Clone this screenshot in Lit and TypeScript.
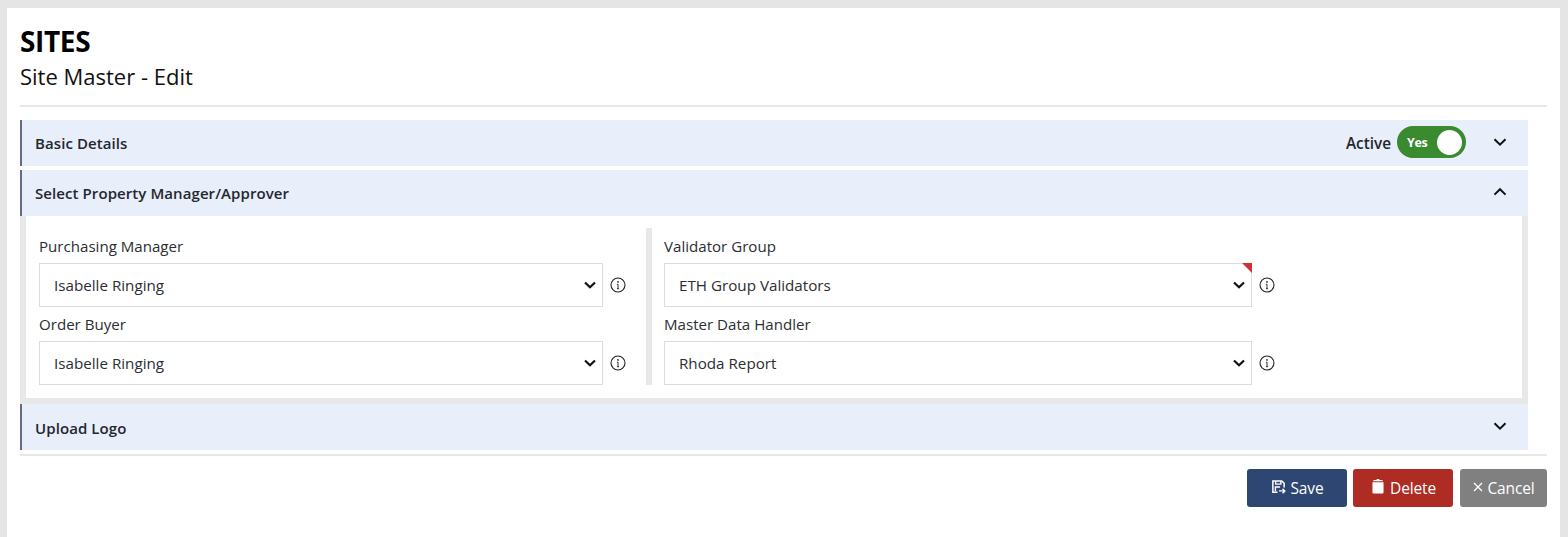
import { LitElement, html, css } from "lit";
import { customElement } from "lit/decorators.js";

const chevDown = html`<svg class="chev" viewBox="0 0 14 14" width="14" height="14"><path d="M1.500 4.200 7 9.600l5.500-5.400" fill="none" stroke="#111" stroke-width="2"/></svg>`;
const chevUp = html`<svg class="chev" viewBox="0 0 14 14" width="14" height="14"><path d="M1.500 9.600 7 4.200l5.500 5.400" fill="none" stroke="#111" stroke-width="2"/></svg>`;
const info = html`<svg class="info" viewBox="0 0 16 16" width="16" height="16"><circle cx="8" cy="8" r="7" fill="none" stroke="#222" stroke-width="1.100"/><circle cx="8" cy="4.900" r="0.900" fill="#333"/><path d="M8 7.200V11.800M6.900 7.300H8M6.900 11.700H9.100" fill="none" stroke="#333" stroke-width="1"/></svg>`;

@customElement("app-root")
export class AppRoot extends LitElement {
  static styles = css`
    :host { display: block; font-family: "Open Sans", "Noto Sans", sans-serif; color: #212529; }
    .page { background: #e5e5e5; padding: 8px 8px 0 7px; height: 529px; }
    .card { background: #fff; height: 529px; padding: 13px 13px 0 13px; box-sizing: border-box; }
    h1 { margin: 0; font-size: 28px; line-height: 40px; font-weight: 700; color: #000; letter-spacing: -0.35px; }
    h2 { margin: 0; font-size: 22px; line-height: 30px; font-weight: 400; color: #111; }
    .rule { height: 2px; background: #e8e8e8; }
    .top { margin-top: 14px; margin-bottom: 13px; }
    .sections { width: 1508px; display: flex; flex-direction: column; gap: 4px; }
    .bar { height: 46px; box-sizing: border-box; background: #e8eefa; border-left: 2px solid #666c80; padding: 0 21px 0 13px; display: flex; align-items: center; font-size: 15px; font-weight: 600; color: #23272d; letter-spacing: 0.08px; }
    .bar .name { flex: 1; }
    .low .name { padding-top: 2px; }
    .active { font-size: 15.300px; margin-right: 6px; letter-spacing: 0; }
    .toggle { width: 69px; height: 32px; box-sizing: border-box; border-radius: 16px; background: #3a8a2f; color: #fff; font-size: 12.500px; font-weight: 700; display: flex; align-items: center; justify-content: space-between; padding: 0 4px 0 10px; margin: 0 27px 2px 0; letter-spacing: -0.3px; }
    .knob { width: 25px; height: 25px; border-radius: 50%; background: #fff; }
    .panel { background: #e8e8e8; padding: 0 6px 6px 6px; }
    .inner { background: #fff; height: 182px; box-sizing: border-box; padding: 12px 0 13px 13px; display: flex; }
    .col { display: flex; flex-direction: column; }
    .left { width: 607px; border-right: 6px solid #e8e8e8; margin-right: 12px; }
    .fieldlabel { font-size: 15.100px; line-height: 34px; height: 34px; color: #2a2e33; }
    .fieldlabel.first { height: 35px; line-height: 37px; }
    .line { display: flex; align-items: center; gap: 7px; }
    select { appearance: none; -webkit-appearance: none; height: 44px; box-sizing: border-box; border: 1px solid #dcdcdc; background: #fff; border-radius: 0; padding: 0 0 0 14px; font: inherit; font-size: 15.200px; color: #2a2e33; outline: none; display: block; }
    .left select { width: 564px; }
    .right select { width: 588px; }
    .wrap { position: relative; display: flex; }
    .flag { position: absolute; top: 0; right: 0; width: 0; height: 0; border-top: 10px solid #d32f2f; border-left: 10px solid transparent; }
    .arrow { position: absolute; right: 6px; top: 15px; pointer-events: none; }
    .info { display: block; }
    .chev { display: block; margin-bottom: 2px; }
    .bottom { margin-top: 4px; }
    .actions { margin-top: 13px; display: flex; justify-content: flex-end; }
    .btn { height: 38px; box-sizing: border-box; border-radius: 3px; color: #fff; font-size: 15.500px; font-weight: 500; letter-spacing: -0.15px; display: flex; align-items: center; justify-content: center; gap: 5px; }
    .save { width: 100px; background: #2e4672; margin-right: 6px; }
    .delete { width: 100px; background: #ae2c23; margin-right: 7px; gap: 6px; padding-left: 2px; }
    .cancel { width: 87px; background: #808080; gap: 4px; padding-left: 1px; }
    .btn svg { margin-bottom: 3px; }
  `;

  private field(label: string, option: string, first: boolean, flag = false) {
    return html`<div class="fieldlabel ${first ? "first" : ""}">${label}</div>
      <div class="line">
        <div class="wrap"><select><option>${option}</option></select>
          <svg class="arrow" viewBox="0 0 14 14" width="14" height="14"><path d="M2 4.500 7 9.300l5-4.800" fill="none" stroke="#111" stroke-width="2.200"/></svg>
          ${flag ? html`<span class="flag"></span>` : ""}</div>
        ${info}
      </div>`;
  }

  render() {
    return html`<div class="page"><div class="card">
      <h1>SITES</h1>
      <h2>Site Master - Edit</h2>
      <div class="rule top"></div>
      <div class="sections">
        <div class="bar"><span class="name">Basic Details</span><span class="active">Active</span>
          <div class="toggle"><span>Yes</span><span class="knob"></span></div>${chevDown}</div>
        <div class="bar"><span class="name">Select Property Manager/Approver</span>${chevUp}</div>
      </div>
      <div class="sections">
        <div class="panel"><div class="inner">
          <div class="col left">
            ${this.field("Purchasing Manager", "Isabelle Ringing", true)}
            ${this.field("Order Buyer", "Isabelle Ringing", false)}
          </div>
          <div class="col right">
            ${this.field("Validator Group", "ETH Group Validators", true, true)}
            ${this.field("Master Data Handler", "Rhoda Report", false)}
          </div>
        </div></div>
        </div>
      <div class="sections">
        <div class="bar low"><span class="name">Upload Logo</span>${chevDown}</div>
      </div>
      <div class="rule bottom"></div>
      <div class="actions">
        <div class="btn save"><svg viewBox="0 0 16 16" width="15" height="15"><path d="M7 14H2V2h9.500L14 4.500V9" fill="none" stroke="#fff" stroke-width="1.600"/><path d="M5 2v3.500h5.500V2M4.700 13V8.500h5" fill="none" stroke="#fff" stroke-width="1.500"/><path d="M8.500 12.700h6M12.300 10.300l2.500 2.400-2.500 2.400" fill="none" stroke="#fff" stroke-width="1.500"/></svg>Save</div>
        <div class="btn delete"><svg viewBox="0 0 13 16" width="12" height="15"><path d="M.500 3.500h12V14.500a1 1 0 0 1-1 1H1.500a1 1 0 0 1-1-1zM1.500 1h3.300L5.300 0h2.400l.500 1h3.300v1.400h-10z" fill="#fff"/></svg>Delete</div>
        <div class="btn cancel"><svg viewBox="0 0 10 10" width="10" height="10"><path d="M1 1l8 8M9 1l-8 8" stroke="#fff" stroke-width="1.300" fill="none"/></svg>Cancel</div>
      </div>
    </div></div>`;
  }
}
